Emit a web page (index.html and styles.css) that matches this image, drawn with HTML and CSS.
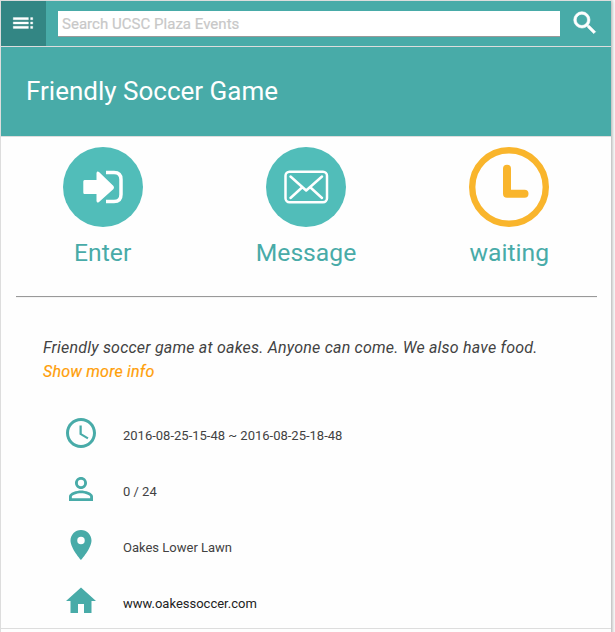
FILE: index.html
```html
<!DOCTYPE html>
<html lang="en">
<head>
<meta charset="utf-8">
<title>Friendly Soccer Game</title>
<link rel="stylesheet" href="styles.css">
</head>
<body>
<main class="card">
  <header class="topbar">
    <button class="menu" aria-label="Menu"><svg class="menu-icon" viewBox="0 0 24 24"><path d="M3 9h14V7H3v2zm0 4h14v-2H3v2zm0 4h14v-2H3v2zm16 0h2v-2h-2v2zm0-10v2h2V7h-2zm0 6h2v-2h-2v2z"/></svg></button>
    <input class="search" type="text" placeholder="Search UCSC Plaza Events">
    <svg class="search-icon" viewBox="0 0 24 24"><path d="M15.5 14h-.79l-.28-.27A6.47 6.47 0 0 0 16 9.5 6.5 6.5 0 1 0 9.5 16c1.61 0 3.09-.59 4.23-1.57l.27.28v.79l5 4.99L20.49 19l-4.99-5zm-6 0a4.5 4.5 0 1 1 0-9 4.5 4.5 0 0 1 0 9z"/></svg>
  </header>
  <h1 class="title">Friendly Soccer Game</h1>
  <nav class="actions">
    <div class="action">
      <svg class="badge" viewBox="0 0 80 80"><circle class="disc" cx="40" cy="40" r="40"/><path class="solid" d="M21.500 33H33.500V26Q34 23.800 36 25L50.500 39Q51.500 40.500 50.500 42L36 55Q34 56.500 33.500 54V47H21.500Q20.300 47 20.300 45.500V34.500Q20.300 33 21.500 33Z"/><path class="line" d="M43 25.500H51Q58 25.500 58 32.500V47.500Q58 54.500 51 54.500H43"/></svg>
      <span>Enter</span>
    </div>
    <div class="action">
      <svg class="badge" viewBox="0 0 80 80"><circle class="disc" cx="40" cy="40" r="40"/><rect class="mail" x="19.500" y="24.800" width="41.500" height="30.500" rx="4"/><path class="mail" d="M24.500 29.500L40.200 43.500L56 29.500M24.500 51L36 40.500M56 51L44.500 40.500"/></svg>
      <span>Message</span>
    </div>
    <div class="action">
      <svg class="badge" viewBox="0 0 80 80"><circle class="ring" cx="40" cy="40" r="36.800"/><path class="hands" d="M38 21.800V46.700H55.500"/></svg>
      <span>waiting</span>
    </div>
  </nav>
  <hr class="rule">
  <section class="about">
    <p>Friendly soccer game at oakes. Anyone can come. We also have food.</p>
    <a class="more">Show more info</a>
  </section>
  <ul class="details">
    <li><svg viewBox="0 0 24 24"><path d="M11.990 2C6.470 2 2 6.480 2 12s4.470 10 9.990 10C17.520 22 22 17.520 22 12S17.520 2 11.990 2zM12 20c-4.420 0-8-3.580-8-8s3.580-8 8-8 8 3.580 8 8-3.580 8-8 8zm.5-13H11v6l5.250 3.150.75-1.230-4.500-2.670z"/></svg><span>2016-08-25-15-48 ~ 2016-08-25-18-48</span></li>
    <li><svg viewBox="0 0 24 24"><path d="M12 5.900a2.100 2.100 0 1 1 0 4.200 2.100 2.100 0 0 1 0-4.200m0 9c2.970 0 6.100 1.460 6.100 2.100v1.100H5.900V17c0-.64 3.130-2.100 6.100-2.100M12 4C9.790 4 8 5.790 8 8s1.790 4 4 4 4-1.790 4-4-1.790-4-4-4zm0 9c-2.670 0-8 1.340-8 4v3h16v-3c0-2.660-5.330-4-8-4z"/></svg><span>0 / 24</span></li>
    <li><svg viewBox="0 0 24 24"><path d="M12 2C8.130 2 5 5.130 5 9c0 5.250 7 13 7 13s7-7.750 7-13c0-3.870-3.130-7-7-7zm0 9.500a2.500 2.500 0 1 1 0-5 2.500 2.500 0 0 1 0 5z"/></svg><span>Oakes Lower Lawn</span></li>
    <li><svg viewBox="0 0 24 24"><path d="M10 20v-6h4v6h5v-8h3L12 3 2 12h3v8z"/></svg><span class="site">www.oakessoccer.com</span></li>
  </ul>
</main>
</body>
</html>
```
FILE: styles.css
```css
* { box-sizing: border-box; }
body {
  margin: 0;
  height: 632px;
  overflow: hidden;
  background: #fdfdfd;
  font-family: Roboto, sans-serif;
}
.card {
  width: 611px;
  height: 640px;
  border: solid #ddd;
  border-width: 1px 0 0 1px;
  background: #fefefe;
  box-shadow: 1px 0 4px rgba(0, 0, 0, .35);
}
.topbar {
  display: flex;
  align-items: center;
  height: 46px;
  background: #48aba8;
  border-bottom: 1px solid #ddd;
}
.menu {
  width: 45px;
  height: 45px;
  padding: 0;
  border: 0;
  background: #338684;
}
.menu-icon { display: block; width: 26px; height: 26px; margin: 0 0 1px 9px; fill: #fff; stroke: #fff; stroke-width: .3; }
.search {
  width: 502px;
  height: 26px;
  margin: 1px 0 0 12px;
  padding: 1px 4px 0;
  border: 0;
  border-bottom: 1px solid #999;
  outline: 0;
  background: #fff;
  font: 400 15px Roboto, sans-serif;
  letter-spacing: .03px;
}
.search::placeholder { color: #c8c8c8; opacity: 1; -webkit-text-stroke: .2px #c8c8c8; }
.search-icon { width: 30px; height: 30px; margin: 0 0 1px 10px; fill: #fff; stroke: #fff; stroke-width: .5; }
.title {
  height: 90px;
  margin: 0;
  padding-left: 25px;
  border-bottom: 1px solid #ddd;
  background: #48aba8;
  color: #fff;
  font-size: 26px;
  font-weight: 400;
  line-height: 89px;
}
.actions {
  display: grid;
  grid-template-columns: repeat(3, 1fr);
  padding-top: 10px;
}
.action {
  display: flex;
  flex-direction: column;
  align-items: center;
  color: #48aba8;
  font-size: 24.7px;
  line-height: 30px;
}
.badge { width: 80px; height: 80px; margin-bottom: 11px; }
.disc { fill: #51bdb9; }
.solid { fill: #fff; }
.line, .mail, .ring, .hands { fill: none; stroke: #fff; stroke-linecap: round; stroke-linejoin: round; }
.line { stroke-width: 3.500; stroke-linecap: butt; }
.mail { stroke-width: 2.500; }
.ring { stroke: #f9b52c; stroke-width: 6.400; }
.hands { stroke: #f9b52c; stroke-width: 8; }
.rule {
  height: 2px;
  margin: 28px 14px 0 15px;
  border: 0;
  border-top: 1px solid #999;
  border-bottom: 1px solid #f4f4f4;
}
.about {
  margin: 38px 42px 0;
  color: #424242;
  font-size: 16px;
  font-style: italic;
  letter-spacing: .21px;
  line-height: 24px;
}
.about p { margin: 0; }
.more { color: #ff9f0a; -webkit-text-stroke: .2px #ff9f0a; }
.details {
  height: 245px;
  margin: 0;
  padding: 20px 0 0 62px;
  border-bottom: 1px solid #ddd;
  list-style: none;
}
.details li {
  display: flex;
  align-items: center;
  height: 56px;
  color: #424242;
  font-size: 13px;
}
.details svg { width: 36px; height: 36px; margin: 1px 24px 0 0; fill: #48aba8; }
.details span { padding-top: 6px; }
.details .site { color: #222; }
```
